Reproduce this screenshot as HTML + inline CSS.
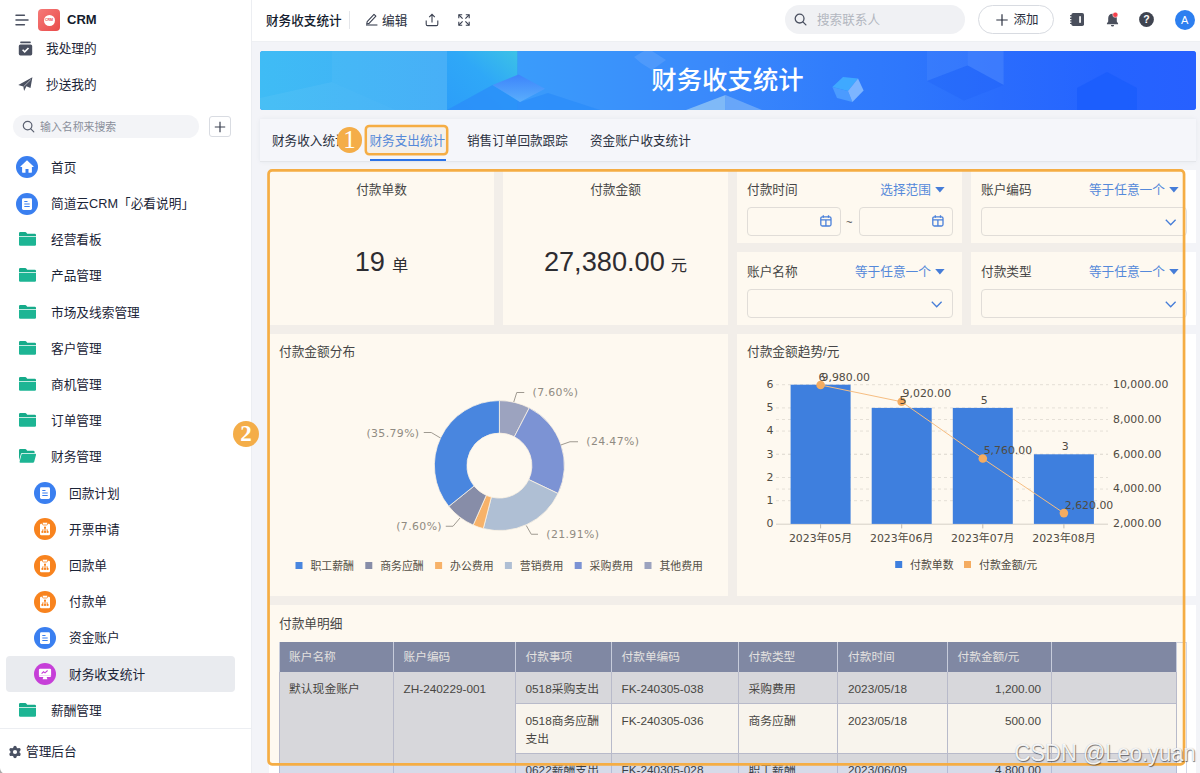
<!DOCTYPE html>
<html lang="zh-CN">
<head>
<meta charset="utf-8">
<title>财务收支统计</title>
<style>
*{box-sizing:border-box;margin:0;padding:0}
html,body{width:1200px;height:773px;overflow:hidden}
body{position:relative;background:#f3f4f8;font-family:"Liberation Sans","Noto Sans CJK SC",sans-serif;font-size:12.7px;color:#1f2533}
#side{position:absolute;left:0;top:0;width:252px;height:773px;background:#fff;border-right:1px solid #eceef2}
#top{position:absolute;left:252px;top:0;width:948px;height:42px;background:#fff;border-bottom:1px solid #eef0f3}
.t{position:absolute;white-space:nowrap;line-height:20px;height:20px}
.mi{position:absolute;left:0;width:251px;height:36px}
.mi .tx{position:absolute;left:51px;top:8.600px;line-height:20px;white-space:nowrap;color:#1b2437}
.mi.sub .tx{left:69px}
.mi svg{position:absolute}
.card{position:absolute;background:#fff}
.ct{position:absolute;white-space:nowrap;line-height:20px;height:20px;color:#3a3f4a}
.blue{color:#4a87e8}
.inp{position:absolute;border:1px solid #e0e2e6;border-radius:4px;background:#fff;height:29px}
svg{position:absolute;overflow:visible}
svg text{font-family:"DejaVu Sans","Noto Sans CJK SC",sans-serif}
table{border-collapse:collapse}
</style>
</head>
<body>
<div id="side">
<svg style="left:15px;top:13px" width="14" height="14" viewBox="0 0 14 14"><g stroke="#4a5060" stroke-width="1.5" stroke-linecap="round"><path d="M1 2.200H9.400M1 7H13M1 11.800H9.400"/></g></svg>
<div style="position:absolute;left:38px;top:9px;width:22px;height:22px;border-radius:4px;background:linear-gradient(135deg,#f57a78,#e94b4b)"><div style="position:absolute;left:5.5px;top:5.5px;width:11px;height:11px;border-radius:50%;background:#fff"></div><div style="position:absolute;left:0;top:8.6px;width:22px;text-align:center;font-size:3.6px;line-height:5px;font-weight:bold;color:#ea5050">CRM</div></div>
<div class="t" style="left:67px;top:10px;font-weight:bold;font-size:13px;color:#141c2e">CRM</div>
<svg style="left:18px;top:41px" width="15" height="15" viewBox="0 0 15 15"><rect x="2.2" y="0.6" width="10.6" height="1.6" rx=".6" fill="#4a5060"/><rect x="0.8" y="3.4" width="13.4" height="11" rx="1.6" fill="#4a5060"/><path d="M4.6 8.8l2.1 2.1 3.8-3.9" stroke="#fff" stroke-width="1.6" fill="none"/></svg>
<div class="t" style="left:46px;top:38.700px;color:#1b2437">我处理的</div>
<svg style="left:18.200px;top:76.600px" width="15" height="15" viewBox="0 0 15 15"><path d="M.300 7.900L14.400 .200 12.500 10.900 8.400 9.300 6.100 13.900 5.300 9.500z" fill="#4a5060"/><path d="M5.600 9.700L12.800 2.600" stroke="#fff" stroke-width=".7" opacity=".8"/></svg>
<div class="t" style="left:46px;top:74.900px;color:#1b2437">抄送我的</div>
<div style="position:absolute;left:13px;top:115px;width:186px;height:23px;border-radius:12px;background:#f3f4f7"></div>
<svg style="left:22px;top:120px" width="13" height="13" viewBox="0 0 13 13"><circle cx="5.6" cy="5.6" r="4.3" fill="none" stroke="#5a6070" stroke-width="1.2"/><path d="M8.8 8.8l3 3" stroke="#5a6070" stroke-width="1.2" stroke-linecap="round"/></svg>
<div class="t" style="left:40px;top:116.5px;font-size:10.9px;color:#8a8f9b">输入名称来搜索</div>
<div style="position:absolute;left:209px;top:116px;width:22px;height:21px;border:1px solid #d9dce2;border-radius:3px;background:#fff"></div>
<svg style="left:214px;top:121px" width="12" height="12" viewBox="0 0 12 12"><path d="M6 0.8V11.2M0.8 6H11.2" stroke="#3a4050" stroke-width="1.2"/></svg>
<div class="mi" style="top:149.3px">
<svg style="left:16.0px;top:7px" width="22" height="22" viewBox="0 0 22 22"><circle cx="11" cy="11" r="11" fill="#3a7ff0"/>
<path d="M11 4.300L4.400 10.400Q4.200 10.900 4.800 10.900H6.100V16.100Q6.100 16.700 6.700 16.700H9.500V13.100H12.500V16.700H15.300Q15.900 16.700 15.900 16.100V10.900H17.200Q17.800 10.900 17.600 10.400z" fill="#fff"/>
</svg>
<div class="tx">首页</div></div>
<div class="mi" style="top:185.5px">
<svg style="left:16.0px;top:7px" width="22" height="22" viewBox="0 0 22 22"><circle cx="11" cy="11" r="11" fill="#3a7ff0"/>
<rect x="6" y="5.200" width="10" height="11.800" rx="1.400" fill="#fff"/><path d="M8.300 8.500h3.200M8.300 11h5.400M8.300 13.500h5.400" stroke="#3a7ff0" stroke-width="1.100"/>
</svg>
<div class="tx">简道云CRM「必看说明」</div></div>
<div class="mi" style="top:221.7px">
<svg style="left:18.5px;top:10.6px" width="17" height="14" viewBox="0 0 17 14"><path d="M0 1.2Q0 0 1.2 0H6.2Q7 0 7.5 .7L8.2 1.7H15.8Q17 1.7 17 2.9V4.2H0z" fill="#16ab8a"/><path d="M0 5H17V12.6Q17 13.8 15.8 13.8H1.2Q0 13.8 0 12.6z" fill="#1db594"/></svg>
<div class="tx">经营看板</div></div>
<div class="mi" style="top:257.9px">
<svg style="left:18.5px;top:10.6px" width="17" height="14" viewBox="0 0 17 14"><path d="M0 1.2Q0 0 1.2 0H6.2Q7 0 7.5 .7L8.2 1.7H15.8Q17 1.7 17 2.9V4.2H0z" fill="#16ab8a"/><path d="M0 5H17V12.6Q17 13.8 15.8 13.8H1.2Q0 13.8 0 12.6z" fill="#1db594"/></svg>
<div class="tx">产品管理</div></div>
<div class="mi" style="top:294.1px">
<svg style="left:18.5px;top:10.6px" width="17" height="14" viewBox="0 0 17 14"><path d="M0 1.2Q0 0 1.2 0H6.2Q7 0 7.5 .7L8.2 1.7H15.8Q17 1.7 17 2.9V4.2H0z" fill="#16ab8a"/><path d="M0 5H17V12.6Q17 13.8 15.8 13.8H1.2Q0 13.8 0 12.6z" fill="#1db594"/></svg>
<div class="tx">市场及线索管理</div></div>
<div class="mi" style="top:330.3px">
<svg style="left:18.5px;top:10.6px" width="17" height="14" viewBox="0 0 17 14"><path d="M0 1.2Q0 0 1.2 0H6.2Q7 0 7.5 .7L8.2 1.7H15.8Q17 1.7 17 2.9V4.2H0z" fill="#16ab8a"/><path d="M0 5H17V12.6Q17 13.8 15.8 13.8H1.2Q0 13.8 0 12.6z" fill="#1db594"/></svg>
<div class="tx">客户管理</div></div>
<div class="mi" style="top:366.5px">
<svg style="left:18.5px;top:10.6px" width="17" height="14" viewBox="0 0 17 14"><path d="M0 1.2Q0 0 1.2 0H6.2Q7 0 7.5 .7L8.2 1.7H15.8Q17 1.7 17 2.9V4.2H0z" fill="#16ab8a"/><path d="M0 5H17V12.6Q17 13.8 15.8 13.8H1.2Q0 13.8 0 12.6z" fill="#1db594"/></svg>
<div class="tx">商机管理</div></div>
<div class="mi" style="top:402.7px">
<svg style="left:18.5px;top:10.6px" width="17" height="14" viewBox="0 0 17 14"><path d="M0 1.2Q0 0 1.2 0H6.2Q7 0 7.5 .7L8.2 1.7H15.8Q17 1.7 17 2.9V4.2H0z" fill="#16ab8a"/><path d="M0 5H17V12.6Q17 13.8 15.8 13.8H1.2Q0 13.8 0 12.6z" fill="#1db594"/></svg>
<div class="tx">订单管理</div></div>
<div class="mi" style="top:438.9px">
<svg style="left:18.5px;top:10.6px" width="17" height="14" viewBox="0 0 17 14"><path d="M0 1.2Q0 0 1.2 0H6.2Q7 0 7.5 .7L8.2 1.7H14.4Q15.6 1.7 15.6 2.9V4H3.2Q2.2 4 1.9 5L0 11.5z" fill="#16ab8a"/><path d="M3.6 4.8H16.2Q17.3 4.8 17 5.9L15.2 12.8Q14.9 13.8 13.9 13.8H1.4Q.3 13.8 .6 12.8L2.4 5.8Q2.7 4.8 3.6 4.8z" fill="#1db594"/></svg>
<div class="tx">财务管理</div></div>
<div class="mi sub" style="top:475.1px">
<svg style="left:34.2px;top:7px" width="22" height="22" viewBox="0 0 22 22"><circle cx="11" cy="11" r="11" fill="#3a7ff0"/>
<rect x="6" y="5.200" width="10" height="11.800" rx="1.400" fill="#fff"/><path d="M8.300 8.500h3.200M8.300 11h5.400M8.300 13.500h5.400" stroke="#3a7ff0" stroke-width="1.100"/>
</svg>
<div class="tx">回款计划</div></div>
<div class="mi sub" style="top:511.3px">
<svg style="left:34.2px;top:7px" width="22" height="22" viewBox="0 0 22 22"><circle cx="11" cy="11" r="11" fill="#f8831e"/>
<rect x="6" y="5.700" width="10" height="11.500" rx="1.200" fill="#fff"/><rect x="8.500" y="4.300" width="5" height="2.700" rx=".9" fill="#fff" stroke="#f8831e" stroke-width=".8"/><g fill="#f8831e"><rect x="10" y="8.700" width="2" height="2"/><rect x="7.500" y="13" width="1.900" height="1.900"/><rect x="10.050" y="13" width="1.900" height="1.900"/><rect x="12.600" y="13" width="1.900" height="1.900"/><rect x="10.700" y="10.400" width=".6" height="2.800"/><rect x="8.150" y="11.700" width="5.700" height=".6"/><rect x="8.150" y="11.700" width=".6" height="1.500"/><rect x="13.250" y="11.700" width=".6" height="1.500"/></g>
</svg>
<div class="tx">开票申请</div></div>
<div class="mi sub" style="top:547.5px">
<svg style="left:34.2px;top:7px" width="22" height="22" viewBox="0 0 22 22"><circle cx="11" cy="11" r="11" fill="#f8831e"/>
<rect x="6" y="5.700" width="10" height="11.500" rx="1.200" fill="#fff"/><rect x="8.500" y="4.300" width="5" height="2.700" rx=".9" fill="#fff" stroke="#f8831e" stroke-width=".8"/><g fill="#f8831e"><rect x="10" y="8.700" width="2" height="2"/><rect x="7.500" y="13" width="1.900" height="1.900"/><rect x="10.050" y="13" width="1.900" height="1.900"/><rect x="12.600" y="13" width="1.900" height="1.900"/><rect x="10.700" y="10.400" width=".6" height="2.800"/><rect x="8.150" y="11.700" width="5.700" height=".6"/><rect x="8.150" y="11.700" width=".6" height="1.500"/><rect x="13.250" y="11.700" width=".6" height="1.500"/></g>
</svg>
<div class="tx">回款单</div></div>
<div class="mi sub" style="top:583.7px">
<svg style="left:34.2px;top:7px" width="22" height="22" viewBox="0 0 22 22"><circle cx="11" cy="11" r="11" fill="#f8831e"/>
<rect x="6" y="5.700" width="10" height="11.500" rx="1.200" fill="#fff"/><rect x="8.500" y="4.300" width="5" height="2.700" rx=".9" fill="#fff" stroke="#f8831e" stroke-width=".8"/><g fill="#f8831e"><rect x="10" y="8.700" width="2" height="2"/><rect x="7.500" y="13" width="1.900" height="1.900"/><rect x="10.050" y="13" width="1.900" height="1.900"/><rect x="12.600" y="13" width="1.900" height="1.900"/><rect x="10.700" y="10.400" width=".6" height="2.800"/><rect x="8.150" y="11.700" width="5.700" height=".6"/><rect x="8.150" y="11.700" width=".6" height="1.500"/><rect x="13.250" y="11.700" width=".6" height="1.500"/></g>
</svg>
<div class="tx">付款单</div></div>
<div class="mi sub" style="top:619.9px">
<svg style="left:34.2px;top:7px" width="22" height="22" viewBox="0 0 22 22"><circle cx="11" cy="11" r="11" fill="#3a7ff0"/>
<rect x="6" y="5.200" width="10" height="11.800" rx="1.400" fill="#fff"/><path d="M8.300 8.500h3.200M8.300 11h5.400M8.300 13.500h5.400" stroke="#3a7ff0" stroke-width="1.100"/>
</svg>
<div class="tx">资金账户</div></div>
<div style="position:absolute;left:6px;top:656.1px;width:229px;height:36px;border-radius:4px;background:#e9ebef"></div>
<div class="mi sub" style="top:656.1px">
<svg style="left:34.2px;top:7px" width="22" height="22" viewBox="0 0 22 22"><circle cx="11" cy="11" r="11" fill="#c63fd8"/>
<rect x="4.900" y="5.800" width="12.200" height="8.200" rx="1.200" fill="#fff"/><path d="M9.300 14h3.400l.7 2.200H8.600z" fill="#fff"/><path d="M4.900 12.300h12.200" stroke="#c63fd8" stroke-width=".5" opacity=".5"/><path d="M7.600 10.600l1.900-1.800 1.500 1.100 2.600-2.400" stroke="#c63fd8" stroke-width="1.100" fill="none"/>
</svg>
<div class="tx">财务收支统计</div></div>
<div class="mi" style="top:692.3px">
<svg style="left:18.5px;top:10.6px" width="17" height="14" viewBox="0 0 17 14"><path d="M0 1.2Q0 0 1.2 0H6.2Q7 0 7.5 .7L8.2 1.7H15.8Q17 1.7 17 2.9V4.2H0z" fill="#16ab8a"/><path d="M0 5H17V12.6Q17 13.8 15.8 13.8H1.2Q0 13.8 0 12.6z" fill="#1db594"/></svg>
<div class="tx">薪酬管理</div></div>
<div style="position:absolute;left:0;top:728px;width:251px;height:1px;background:#eceef2"></div>
<svg style="left:9.300px;top:746px" width="12" height="12" viewBox="-6 -6 12 12"><g stroke="#4a5163" stroke-width="3.300" stroke-linecap="round"><line x1="-0.00" y1="-4.60" x2="0.00" y2="4.60"/><line x1="-3.98" y1="-2.30" x2="3.98" y2="2.30"/><line x1="3.98" y1="-2.30" x2="-3.98" y2="2.30"/></g><circle r="4.500" fill="#4a5163"/><circle r="2.100" fill="#fff"/></svg>
<div class="t" style="left:26px;top:742px;color:#1b2437">管理后台</div>
</div>
<div id="top"></div>
<div class="t" style="left:266px;top:10.800px;font-weight:500;font-size:12.6px;color:#141c2e">财务收支统计</div>
<div style="position:absolute;left:349px;top:11px;width:1px;height:18px;background:#e4e6ea"></div>
<svg style="left:364.500px;top:12.200px" width="13" height="14" viewBox="0 0 13 14"><path d="M2.2 9.6L9 2.4l1.900 1.800L4.100 11.400 1.700 12z" fill="none" stroke="#3a4050" stroke-width="1.1" stroke-linejoin="round"/><path d="M1 13h11.400" stroke="#3a4050" stroke-width="1.1"/></svg>
<div class="t" style="left:382px;top:10.800px;color:#2a3040">编辑</div>
<svg style="left:425px;top:13px" width="14" height="14" viewBox="0 0 14 14"><path d="M1.2 7.6v3.600q0 1.400 1.400 1.400h8.800q1.400 0 1.400-1.400V7.600" fill="none" stroke="#3a4050" stroke-width="1.1"/><path d="M7 9.600V1.600M4.200 4.200L7 1.400l2.800 2.800" fill="none" stroke="#3a4050" stroke-width="1.1"/></svg>
<svg style="left:458px;top:14px" width="12" height="12" viewBox="0 0 12 12"><g fill="none" stroke="#3a4050" stroke-width="1.1"><path d="M.8 4.200V.8h3.400M7.800 .8h3.400v3.400M11.200 7.800v3.400h-3.400M4.200 11.200h-3.400v-3.400"/><path d="M1 1l3.600 3.600M11 1L7.400 4.600M11 11L7.400 7.400M1 11l3.600-3.600"/></g></svg>
<div style="position:absolute;left:785px;top:5px;width:180px;height:29px;border-radius:15px;background:#f0f1f4"></div>
<svg style="left:794px;top:13px" width="13" height="13" viewBox="0 0 13 13"><circle cx="5.6" cy="5.600" r="4.400" fill="none" stroke="#4a5060" stroke-width="1.300"/><path d="M8.900 8.900l3 3" stroke="#4a5060" stroke-width="1.300" stroke-linecap="round"/></svg>
<div class="t" style="left:817px;top:10px;color:#b3b7c0;font-size:12.600px">搜索联系人</div>
<div style="position:absolute;left:978px;top:5px;width:76px;height:29px;border-radius:15px;background:#fff;border:1px solid #d8dbe1"></div>
<svg style="left:996px;top:14px" width="12" height="12" viewBox="0 0 12 12"><path d="M6 .300V11.700M.300 6H11.700" stroke="#2a3040" stroke-width="1.200"/></svg>
<div class="t" style="left:1013.500px;top:10px;color:#2a3040;font-size:12.500px">添加</div>
<svg style="left:1070px;top:13px" width="14" height="13" viewBox="0 0 14 13"><rect x="1.400" y="0" width="12.600" height="13" rx="1.800" fill="#4a4f5c"/><rect x="9.200" y="3.200" width="1.700" height="6.600" fill="#fff"/><g fill="#4a4f5c"><rect x="0" y="2" width="2.400" height="1.300" rx=".5"/><rect x="0" y="4.600" width="2.400" height="1.300" rx=".5"/><rect x="0" y="7.200" width="2.400" height="1.300" rx=".5"/><rect x="0" y="9.800" width="2.400" height="1.300" rx=".5"/></g></svg>
<svg style="left:1106px;top:12px" width="14" height="15" viewBox="0 0 14 15"><path d="M6.500 1.800c-2.700 0-4.300 2-4.300 4.500v3.200L.9 11.600v.6h11.200v-.6l-1.300-2.100V6.300c0-2.500-1.600-4.500-4.300-4.500z" fill="#4a4f5c"/><path d="M4.900 13h3.200a1.600 1.600 0 01-3.200 0z" fill="#4a4f5c"/><circle cx="9.300" cy="2.800" r="2.600" fill="#f5404b" stroke="#fff" stroke-width=".5"/></svg>
<svg style="left:1139px;top:12px" width="15" height="15" viewBox="0 0 15 15"><circle cx="7.500" cy="7.500" r="7.400" fill="#3f4450"/><text x="7.500" y="11.200" text-anchor="middle" font-size="10.500" font-weight="bold" fill="#fff" style="font-family:'Liberation Sans',sans-serif">?</text></svg>
<div style="position:absolute;left:1174.600px;top:10px;width:20px;height:20px;border-radius:50%;background:#2d7ff0;color:#fff;font-size:11px;line-height:20px;text-align:center">A</div>
<div style="position:absolute;left:260px;top:51px;width:935.500px;height:59px;border-radius:3px;overflow:hidden;background:#2d7efb">
<svg style="left:0;top:0" width="936" height="59" viewBox="0 0 936 59"><defs><linearGradient id="bg1" x1="0" x2="1" y1="0" y2="0"><stop offset="0" stop-color="#3fbcf5"/><stop offset="1" stop-color="#41adf7"/></linearGradient><linearGradient id="bg2" x1="0" x2="1" y1="0" y2="0"><stop offset="0" stop-color="#3a9cfb"/><stop offset=".3" stop-color="#3a88fb"/><stop offset=".46" stop-color="#317dfc"/><stop offset=".57" stop-color="#2e77fc"/><stop offset=".71" stop-color="#2a6cfd"/><stop offset=".86" stop-color="#2564ff"/><stop offset="1" stop-color="#2760ff"/></linearGradient><linearGradient id="fc" x1="0" x2="1" y1="1" y2="0"><stop offset="0" stop-color="#2c9ef9"/><stop offset=".55" stop-color="#2fa8f7"/><stop offset="1" stop-color="#3cc2e6"/></linearGradient><linearGradient id="dm" x1="0" x2="0" y1="0" y2="1"><stop offset="0" stop-color="#3d84fb"/><stop offset="1" stop-color="#5aaefc"/></linearGradient></defs>
<rect x="0" y="0" width="187" height="59" fill="url(#bg1)"/>
<rect x="257.500" y="0" width="679" height="59" fill="url(#bg2)"/>
<rect x="187" y="0" width="70.500" height="59" fill="url(#fc)"/>
<polygon points="0.0,59.0 0.0,47.0 72.0,31.0 136.0,59.0" fill="#fff" opacity=".05"/>
<polygon points="72.0,0.0 187.0,0.0 187.0,59.0 136.0,59.0 72.0,31.0" fill="#fff" opacity=".035"/>
<polygon points="187.0,59.0 232.5,34.0 260.0,51.0 288.0,42.0 340.0,59.0" fill="#2b8cf9" opacity=".75"/>
<polygon points="257.5,0.0 257.5,23.5 285.0,37.8 315.0,59.0 340.0,59.0 380.0,0.0" fill="#3a9afb" opacity=".0"/>
<polygon points="232.5,34.0 258.5,23.5 285.0,37.8 260.0,51.0" fill="url(#dm)"/>
<polygon points="374.0,6.0 384.0,0.0 392.0,0.0 406.0,9.0 392.0,19.0 381.0,12.0" fill="#7fb4fc" opacity=".3"/>
<polygon points="426.0,59.0 465.5,44.0 465.5,59.0" fill="#8cc2f6" opacity=".85"/>
<polygon points="465.5,59.0 465.5,44.0 502.0,59.0" fill="#74aef9" opacity=".8"/>
<polygon points="572.4,36.0 588.0,40.0 592.4,51.0 577.0,47.0" fill="#4b9bff"/>
<polygon points="572.4,36.0 583.0,26.0 598.0,27.4 588.0,40.0" fill="#3fa9ff"/>
<polygon points="588.0,40.0 598.0,27.4 603.6,39.4 592.4,51.0" fill="#7db5ff"/>
<polygon points="667.0,0.0 707.6,0.0 707.6,14.6 667.0,30.0" fill="#5a97ff" opacity=".22"/>
<polygon points="707.6,0.0 743.6,0.0 743.6,34.0 707.6,14.6" fill="#6aa2ff" opacity=".28"/>
<polygon points="667.0,30.0 707.6,14.6 743.6,34.0 704.0,49.4" fill="#1f62f5" opacity=".35"/>
<polygon points="817.0,59.0 817.0,37.0 847.0,21.0 877.0,37.0 877.0,59.0" fill="#1a5cfd" opacity=".8"/>
</svg>
<div style="position:absolute;left:0;top:0;width:935px;height:59px;line-height:58px;text-align:center;color:#fff;font-size:25.300px;font-weight:500;letter-spacing:.1px">财务收支统计</div>
</div>
<div style="position:absolute;left:260px;top:119px;width:935.500px;height:42.500px;background:#f5f6fa;border-bottom:1px solid #e4e6ea;box-shadow:0 0 4px rgba(120,130,160,.10)"></div>
<div class="t" style="left:272px;top:130.500px;color:#2a3040;font-size:12.600px">财务收入统计</div>
<div class="t" style="left:369.5px;top:130.500px;color:#4a87e8;font-size:12.600px">财务支出统计</div>
<div class="t" style="left:467px;top:130.500px;color:#2a3040;font-size:12.600px">销售订单回款跟踪</div>
<div class="t" style="left:590px;top:130.500px;color:#2a3040;font-size:12.600px">资金账户收支统计</div>
<div style="position:absolute;left:369.500px;top:158.800px;width:76px;height:2px;background:#2b73e8"></div>
<div class="card" style="left:269px;top:170px;width:225px;height:155px"></div>
<div class="ct" style="left:269px;top:179.500px;width:225px;text-align:center">付款单数</div>
<div class="t" style="left:269px;top:242px;width:225px;height:40px;line-height:40px;text-align:center;color:#1f2533"><span style="font-size:27.200px">19</span><span style="font-size:16.300px;margin-left:7px">单</span></div>
<div class="card" style="left:503px;top:170px;width:225px;height:155px"></div>
<div class="ct" style="left:503px;top:179.500px;width:225px;text-align:center">付款金额</div>
<div class="t" style="left:503px;top:242px;width:225px;height:40px;line-height:40px;text-align:center;color:#1f2533"><span style="font-size:27.200px">27,380.00</span><span style="font-size:16.300px;margin-left:6px">元</span></div>
<div class="card" style="left:737px;top:170px;width:225px;height:73px"></div>
<div class="ct" style="left:747px;top:179.5px">付款时间</div>
<div class="ct blue" style="right:269px;top:179.5px">选择范围</div>
<svg style="left:935.3px;top:186.8px" width="10" height="6" viewBox="0 0 10 6"><path d="M.2 0H9.600L4.900 5.400z" fill="#3a7be6"/></svg>
<div class="inp" style="left:746.5px;top:207px;width:94px"></div>
<div class="inp" style="left:859px;top:207px;width:93.500px"></div>
<div class="ct" style="left:846px;top:212px;font-size:11px">~</div>
<svg style="left:820.4px;top:215px" width="12" height="12" viewBox="0 0 12 12"><g fill="none" stroke="#3f7fe8" stroke-width="1.300"><rect x=".800" y="1.800" width="10.200" height="9.200" rx="1.500"/><path d="M.800 4.800h10.200M5.900 4.800v6.200M3.300 .300v2.400M8.500 .300v2.400"/></g></svg>
<svg style="left:932.4px;top:215px" width="12" height="12" viewBox="0 0 12 12"><g fill="none" stroke="#3f7fe8" stroke-width="1.300"><rect x=".800" y="1.800" width="10.200" height="9.200" rx="1.500"/><path d="M.800 4.800h10.200M5.900 4.800v6.200M3.300 .300v2.400M8.500 .300v2.400"/></g></svg>
<div class="card" style="left:971px;top:170px;width:225px;height:73px"></div>
<div class="ct" style="left:981px;top:179.5px">账户编码</div>
<div class="ct blue" style="right:35px;top:179.5px">等于任意一个</div>
<svg style="left:1169.3px;top:186.8px" width="10" height="6" viewBox="0 0 10 6"><path d="M.2 0H9.600L4.900 5.400z" fill="#3a7be6"/></svg>
<div class="inp" style="left:980.5px;top:207px;width:206px"></div>
<svg style="left:1165.2px;top:218.8px" width="12" height="7" viewBox="0 0 12 7"><path d="M.800 .800L5.700 5.800l4.900-5" fill="none" stroke="#3a7be6" stroke-width="1.300"/></svg>
<div class="card" style="left:737px;top:252px;width:225px;height:73px"></div>
<div class="ct" style="left:747px;top:261.5px">账户名称</div>
<div class="ct blue" style="right:269px;top:261.5px">等于任意一个</div>
<svg style="left:935.3px;top:268.8px" width="10" height="6" viewBox="0 0 10 6"><path d="M.2 0H9.600L4.900 5.400z" fill="#3a7be6"/></svg>
<div class="inp" style="left:746.5px;top:289px;width:206px"></div>
<svg style="left:931.2px;top:300.8px" width="12" height="7" viewBox="0 0 12 7"><path d="M.800 .800L5.700 5.800l4.900-5" fill="none" stroke="#3a7be6" stroke-width="1.300"/></svg>
<div class="card" style="left:971px;top:252px;width:225px;height:73px"></div>
<div class="ct" style="left:981px;top:261.5px">付款类型</div>
<div class="ct blue" style="right:35px;top:261.5px">等于任意一个</div>
<svg style="left:1169.3px;top:268.8px" width="10" height="6" viewBox="0 0 10 6"><path d="M.2 0H9.600L4.900 5.400z" fill="#3a7be6"/></svg>
<div class="inp" style="left:980.5px;top:289px;width:206px"></div>
<svg style="left:1165.2px;top:300.8px" width="12" height="7" viewBox="0 0 12 7"><path d="M.800 .800L5.700 5.800l4.900-5" fill="none" stroke="#3a7be6" stroke-width="1.300"/></svg>
<div class="card" style="left:269px;top:334px;width:459px;height:262px"></div>
<div class="ct" style="left:279px;top:342px">付款金额分布</div>
<div class="card" style="left:737px;top:334px;width:459px;height:262px"></div>
<div class="ct" style="left:747px;top:342px">付款金额趋势/元</div>
<div class="card" style="left:269px;top:605px;width:927px;height:180px"></div>
<div class="ct" style="left:279px;top:613.500px">付款单明细</div>
<svg style="left:0;top:0" width="1200" height="773" viewBox="0 0 1200 773">
<path d="M499.40 400.60A65 65 0 0 1 529.27 407.87L514.34 436.74A32.5 32.5 0 0 0 499.40 433.10Z" fill="#97a3cb" stroke="#fdf9f3" stroke-width=".800"/>
<path d="M529.27 407.87A65 65 0 0 1 558.09 493.53L528.75 479.57A32.5 32.5 0 0 0 514.34 436.74Z" fill="#7492e1" stroke="#fdf9f3" stroke-width=".800"/>
<path d="M558.09 493.53A65 65 0 0 1 483.31 528.58L491.36 497.09A32.5 32.5 0 0 0 528.75 479.57Z" fill="#abc1e1" stroke="#fdf9f3" stroke-width=".800"/>
<path d="M483.31 528.58A65 65 0 0 1 473.17 525.07L486.29 495.34A32.5 32.5 0 0 0 491.36 497.09Z" fill="#f8b36f" stroke="#fdf9f3" stroke-width=".800"/>
<path d="M473.17 525.07A65 65 0 0 1 448.77 506.37L474.09 485.98A32.5 32.5 0 0 0 486.29 495.34Z" fill="#808cb2" stroke="#fdf9f3" stroke-width=".800"/>
<path d="M448.77 506.37A65 65 0 0 1 499.40 400.60L499.40 433.10A32.5 32.5 0 0 0 474.09 485.98Z" fill="#3e84ed" stroke="#fdf9f3" stroke-width=".800"/>
<polyline points="513.75,402 516.75,392.5 524.25,392.5" fill="none" stroke="#9a9a9a" stroke-width="1"/>
<polyline points="560.75,445 570,441.75 578,441.75" fill="none" stroke="#9a9a9a" stroke-width="1"/>
<polyline points="526.25,525.5 531.25,534.25 538,534.25" fill="none" stroke="#9a9a9a" stroke-width="1"/>
<polyline points="460,518 453,526.25 445.75,526.25" fill="none" stroke="#9a9a9a" stroke-width="1"/>
<polyline points="440.5,438 431.25,432.5 423.75,432.5" fill="none" stroke="#9a9a9a" stroke-width="1"/>
<text x="532.5" y="396" text-anchor="start" font-size="10.900" letter-spacing=".38" fill="#8a8a8a">(7.60%)</text>
<text x="586.25" y="445.25" text-anchor="start" font-size="10.900" letter-spacing=".38" fill="#8a8a8a">(24.47%)</text>
<text x="546.25" y="538.25" text-anchor="start" font-size="10.900" letter-spacing=".38" fill="#8a8a8a">(21.91%)</text>
<text x="442" y="529.75" text-anchor="end" font-size="10.900" letter-spacing=".38" fill="#8a8a8a">(7.60%)</text>
<text x="419.5" y="436.5" text-anchor="end" font-size="10.900" letter-spacing=".38" fill="#8a8a8a">(35.79%)</text>
<rect x="295.5" y="562" width="7" height="7" fill="#3e84ed"/>
<text x="310.4" y="569.700" font-size="10.900" fill="#4a4a4a">职工薪酬</text>
<rect x="365.3" y="562" width="7" height="7" fill="#808cb2"/>
<text x="380.2" y="569.700" font-size="10.900" fill="#4a4a4a">商务应酬</text>
<rect x="435.1" y="562" width="7" height="7" fill="#f8b36f"/>
<text x="450.0" y="569.700" font-size="10.900" fill="#4a4a4a">办公费用</text>
<rect x="504.9" y="562" width="7" height="7" fill="#abc1e1"/>
<text x="519.8" y="569.700" font-size="10.900" fill="#4a4a4a">营销费用</text>
<rect x="574.7" y="562" width="7" height="7" fill="#7492e1"/>
<text x="589.6" y="569.700" font-size="10.900" fill="#4a4a4a">采购费用</text>
<rect x="644.5" y="562" width="7" height="7" fill="#97a3cb"/>
<text x="659.4" y="569.700" font-size="10.900" fill="#4a4a4a">其他费用</text>
</svg>
<svg style="left:0;top:0" width="1200" height="773" viewBox="0 0 1200 773">
<line x1="776" x2="1108" y1="500.70" y2="500.70" stroke="#e2e2e2" stroke-width=".9" stroke-dasharray="3,3"/>
<line x1="776" x2="1108" y1="477.50" y2="477.50" stroke="#e2e2e2" stroke-width=".9" stroke-dasharray="3,3"/>
<line x1="776" x2="1108" y1="454.30" y2="454.30" stroke="#e2e2e2" stroke-width=".9" stroke-dasharray="3,3"/>
<line x1="776" x2="1108" y1="431.10" y2="431.10" stroke="#e2e2e2" stroke-width=".9" stroke-dasharray="3,3"/>
<line x1="776" x2="1108" y1="407.90" y2="407.90" stroke="#e2e2e2" stroke-width=".9" stroke-dasharray="3,3"/>
<line x1="776" x2="1108" y1="384.70" y2="384.70" stroke="#e2e2e2" stroke-width=".9" stroke-dasharray="3,3"/>
<line x1="776" x2="1108" y1="489.10" y2="489.10" stroke="#e2e2e2" stroke-width=".9" stroke-dasharray="3,3"/>
<line x1="776" x2="1108" y1="454.30" y2="454.30" stroke="#e2e2e2" stroke-width=".9" stroke-dasharray="3,3"/>
<line x1="776" x2="1108" y1="419.50" y2="419.50" stroke="#e2e2e2" stroke-width=".9" stroke-dasharray="3,3"/>
<line x1="776" x2="1108" y1="524.1999999999999" y2="524.1999999999999" stroke="#d4d4d4" stroke-width="1"/>
<rect x="790.6" y="384.70" width="60" height="139.20" fill="#327dec"/>
<rect x="871.7" y="407.90" width="60" height="116.00" fill="#327dec"/>
<rect x="952.8" y="407.90" width="60" height="116.00" fill="#327dec"/>
<rect x="1033.9" y="454.30" width="60" height="69.60" fill="#327dec"/>
<line x1="820.6" x2="820.6" y1="523.9" y2="528.4" stroke="#bdbdbd" stroke-width="1"/>
<line x1="901.7" x2="901.7" y1="523.9" y2="528.4" stroke="#bdbdbd" stroke-width="1"/>
<line x1="982.8" x2="982.8" y1="523.9" y2="528.4" stroke="#bdbdbd" stroke-width="1"/>
<line x1="1063.9" x2="1063.9" y1="523.9" y2="528.4" stroke="#bdbdbd" stroke-width="1"/>
<text x="770" y="527.10" text-anchor="middle" font-size="10.900" fill="#454545">0</text>
<text x="770" y="503.90" text-anchor="middle" font-size="10.900" fill="#454545">1</text>
<text x="770" y="480.70" text-anchor="middle" font-size="10.900" fill="#454545">2</text>
<text x="770" y="457.50" text-anchor="middle" font-size="10.900" fill="#454545">3</text>
<text x="770" y="434.30" text-anchor="middle" font-size="10.900" fill="#454545">4</text>
<text x="770" y="411.10" text-anchor="middle" font-size="10.900" fill="#454545">5</text>
<text x="770" y="387.90" text-anchor="middle" font-size="10.900" fill="#454545">6</text>
<text x="1113" y="527.10" font-size="10.900" fill="#454545">2,000.00</text>
<text x="1113" y="492.30" font-size="10.900" fill="#454545">4,000.00</text>
<text x="1113" y="457.50" font-size="10.900" fill="#454545">6,000.00</text>
<text x="1113" y="422.70" font-size="10.900" fill="#454545">8,000.00</text>
<text x="1113" y="387.90" font-size="10.900" fill="#454545">10,000.00</text>
<text x="820.6" y="542.400" text-anchor="middle" font-size="10.900" fill="#454545">2023年05月</text>
<text x="901.7" y="542.400" text-anchor="middle" font-size="10.900" fill="#454545">2023年06月</text>
<text x="982.8" y="542.400" text-anchor="middle" font-size="10.900" fill="#454545">2023年07月</text>
<text x="1063.9" y="542.400" text-anchor="middle" font-size="10.900" fill="#454545">2023年08月</text>
<polyline points="820.6,385.0 901.7,401.8 982.8,458.5 1063.9,513.1" fill="none" stroke="#f7c08a" stroke-width="1"/>
<circle cx="820.6" cy="385.0" r="4.300" fill="#f5ad66"/>
<circle cx="901.7" cy="401.8" r="4.300" fill="#f5ad66"/>
<circle cx="982.8" cy="458.5" r="4.300" fill="#f5ad66"/>
<circle cx="1063.9" cy="513.1" r="4.300" fill="#f5ad66"/>
<text x="821.5" y="380.6" font-size="10.900" fill="#454545">9,980.00</text>
<text x="902.6" y="397.4" font-size="10.900" fill="#454545">9,020.00</text>
<text x="983.7" y="454.1" font-size="10.900" fill="#454545">5,760.00</text>
<text x="1064.8" y="508.7" font-size="10.900" fill="#454545">2,620.00</text>
<text x="821.9" y="380.50" text-anchor="middle" font-size="10.900" fill="#454545">6</text>
<text x="903.0" y="403.70" text-anchor="middle" font-size="10.900" fill="#454545">5</text>
<text x="984.0999999999999" y="403.70" text-anchor="middle" font-size="10.900" fill="#454545">5</text>
<text x="1065.2" y="450.10" text-anchor="middle" font-size="10.900" fill="#454545">3</text>
<rect x="895.200" y="561" width="7" height="7" fill="#327dec"/><text x="910" y="568.500" font-size="10.900" fill="#444">付款单数</text>
<rect x="964" y="561" width="7" height="7" fill="#f5ad66"/><text x="979" y="568.500" font-size="10.900" fill="#444">付款金额/元</text>
</svg>
<div style="position:absolute;left:279px;top:641.500px;width:907.500px;height:1px;background:#d3d7e6"></div>
<div style="position:absolute;left:279px;top:642px;width:114.5px;height:30px;background:#7986ad;border-left:1px solid #c5cfe9;border-right:1px solid #c5cfe9;color:#e3e6ee;line-height:30px;padding-left:9px;font-size:11.700px;white-space:nowrap">账户名称</div>
<div style="position:absolute;left:393.5px;top:642px;width:122.0px;height:30px;background:#7986ad;border-right:1px solid #c5cfe9;color:#e3e6ee;line-height:30px;padding-left:10px;font-size:11.700px;white-space:nowrap">账户编码</div>
<div style="position:absolute;left:515.5px;top:642px;width:96.0px;height:30px;background:#7986ad;border-right:1px solid #c5cfe9;color:#e3e6ee;line-height:30px;padding-left:10px;font-size:11.700px;white-space:nowrap">付款事项</div>
<div style="position:absolute;left:611.5px;top:642px;width:127.0px;height:30px;background:#7986ad;border-right:1px solid #c5cfe9;color:#e3e6ee;line-height:30px;padding-left:10px;font-size:11.700px;white-space:nowrap">付款单编码</div>
<div style="position:absolute;left:738.5px;top:642px;width:99.5px;height:30px;background:#7986ad;border-right:1px solid #c5cfe9;color:#e3e6ee;line-height:30px;padding-left:10px;font-size:11.700px;white-space:nowrap">付款类型</div>
<div style="position:absolute;left:838px;top:642px;width:109.5px;height:30px;background:#7986ad;border-right:1px solid #c5cfe9;color:#e3e6ee;line-height:30px;padding-left:10px;font-size:11.700px;white-space:nowrap">付款时间</div>
<div style="position:absolute;left:947.5px;top:642px;width:104.5px;height:30px;background:#7986ad;border-right:1px solid #c5cfe9;color:#e3e6ee;line-height:30px;padding-left:10px;font-size:11.700px;white-space:nowrap">付款金额/元</div>
<div style="position:absolute;left:1052px;top:642px;width:125px;height:30px;background:#7986ad;border-right:1px solid #c5cfe9;color:#e3e6ee;line-height:30px;padding-left:10px;font-size:11.700px;white-space:nowrap"></div>
<div style="position:absolute;left:279px;top:672px;width:114.5px;height:140px;background:#d6dbe9;border-left:1px solid #b4bcd7;border-right:1px solid #b4bcd7;border-bottom:1px solid #b4bcd7;color:#3b3f46;line-height:18px;padding-top:7.500px;padding-left:9px;font-size:11.800px">默认现金账户</div>
<div style="position:absolute;left:393.5px;top:672px;width:122.0px;height:140px;background:#d6dbe9;border-right:1px solid #b4bcd7;border-bottom:1px solid #b4bcd7;color:#3b3f46;line-height:18px;padding-top:7.500px;padding-left:10px;font-size:11.800px">ZH-240229-001</div>
<div style="position:absolute;left:515.5px;top:672px;width:96.0px;height:32.3px;background:#d6dbe9;border-right:1px solid #b4bcd7;border-bottom:1px solid #b4bcd7;color:#3b3f46;line-height:18px;padding-top:7.500px;padding-left:10px;font-size:11.800px">0518采购支出</div>
<div style="position:absolute;left:611.5px;top:672px;width:127.0px;height:32.3px;background:#d6dbe9;border-right:1px solid #b4bcd7;border-bottom:1px solid #b4bcd7;color:#3b3f46;line-height:18px;padding-top:7.500px;padding-left:10px;font-size:11.800px">FK-240305-038</div>
<div style="position:absolute;left:738.5px;top:672px;width:99.5px;height:32.3px;background:#d6dbe9;border-right:1px solid #b4bcd7;border-bottom:1px solid #b4bcd7;color:#3b3f46;line-height:18px;padding-top:7.500px;padding-left:10px;font-size:11.800px">采购费用</div>
<div style="position:absolute;left:838px;top:672px;width:109.5px;height:32.3px;background:#d6dbe9;border-right:1px solid #b4bcd7;border-bottom:1px solid #b4bcd7;color:#3b3f46;line-height:18px;padding-top:7.500px;padding-left:10px;font-size:11.800px">2023/05/18</div>
<div style="position:absolute;left:947.5px;top:672px;width:104.5px;height:32.3px;background:#d6dbe9;border-right:1px solid #b4bcd7;border-bottom:1px solid #b4bcd7;color:#3b3f46;line-height:18px;padding-top:7.500px;text-align:right;padding-right:10px;font-size:11.800px">1,200.00</div>
<div style="position:absolute;left:1052px;top:672px;width:125px;height:32.3px;background:#d6dbe9;border-right:1px solid #b4bcd7;border-bottom:1px solid #b4bcd7;color:#3b3f46;line-height:18px;padding-top:7.500px;padding-left:10px;font-size:11.800px"></div>
<div style="position:absolute;left:515.5px;top:704.3px;width:96.0px;height:49.5px;background:#f9fafc;border-right:1px solid #b4bcd7;border-bottom:1px solid #b4bcd7;color:#3b3f46;line-height:18px;padding-top:7.500px;padding-left:10px;font-size:11.800px">0518商务应酬<br>支出</div>
<div style="position:absolute;left:611.5px;top:704.3px;width:127.0px;height:49.5px;background:#f9fafc;border-right:1px solid #b4bcd7;border-bottom:1px solid #b4bcd7;color:#3b3f46;line-height:18px;padding-top:7.500px;padding-left:10px;font-size:11.800px">FK-240305-036</div>
<div style="position:absolute;left:738.5px;top:704.3px;width:99.5px;height:49.5px;background:#f9fafc;border-right:1px solid #b4bcd7;border-bottom:1px solid #b4bcd7;color:#3b3f46;line-height:18px;padding-top:7.500px;padding-left:10px;font-size:11.800px">商务应酬</div>
<div style="position:absolute;left:838px;top:704.3px;width:109.5px;height:49.5px;background:#f9fafc;border-right:1px solid #b4bcd7;border-bottom:1px solid #b4bcd7;color:#3b3f46;line-height:18px;padding-top:7.500px;padding-left:10px;font-size:11.800px">2023/05/18</div>
<div style="position:absolute;left:947.5px;top:704.3px;width:104.5px;height:49.5px;background:#f9fafc;border-right:1px solid #b4bcd7;border-bottom:1px solid #b4bcd7;color:#3b3f46;line-height:18px;padding-top:7.500px;text-align:right;padding-right:10px;font-size:11.800px">500.00</div>
<div style="position:absolute;left:1052px;top:704.3px;width:125px;height:49.5px;background:#f9fafc;border-right:1px solid #b4bcd7;border-bottom:1px solid #b4bcd7;color:#3b3f46;line-height:18px;padding-top:7.500px;padding-left:10px;font-size:11.800px"></div>
<div style="position:absolute;left:515.5px;top:753.8px;width:96.0px;height:32px;background:#d6dbe9;border-right:1px solid #b4bcd7;border-bottom:1px solid #b4bcd7;color:#3b3f46;line-height:18px;padding-top:7.500px;padding-left:10px;font-size:11.800px">0622薪酬支出</div>
<div style="position:absolute;left:611.5px;top:753.8px;width:127.0px;height:32px;background:#d6dbe9;border-right:1px solid #b4bcd7;border-bottom:1px solid #b4bcd7;color:#3b3f46;line-height:18px;padding-top:7.500px;padding-left:10px;font-size:11.800px">FK-240305-028</div>
<div style="position:absolute;left:738.5px;top:753.8px;width:99.5px;height:32px;background:#d6dbe9;border-right:1px solid #b4bcd7;border-bottom:1px solid #b4bcd7;color:#3b3f46;line-height:18px;padding-top:7.500px;padding-left:10px;font-size:11.800px">职工薪酬</div>
<div style="position:absolute;left:838px;top:753.8px;width:109.5px;height:32px;background:#d6dbe9;border-right:1px solid #b4bcd7;border-bottom:1px solid #b4bcd7;color:#3b3f46;line-height:18px;padding-top:7.500px;padding-left:10px;font-size:11.800px">2023/06/09</div>
<div style="position:absolute;left:947.5px;top:753.8px;width:104.5px;height:32px;background:#d6dbe9;border-right:1px solid #b4bcd7;border-bottom:1px solid #b4bcd7;color:#3b3f46;line-height:18px;padding-top:7.500px;text-align:right;padding-right:10px;font-size:11.800px">4,800.00</div>
<div style="position:absolute;left:1052px;top:753.8px;width:125px;height:32px;background:#d6dbe9;border-right:1px solid #b4bcd7;border-bottom:1px solid #b4bcd7;color:#3b3f46;line-height:18px;padding-top:7.500px;padding-left:10px;font-size:11.800px"></div>
<div style="position:absolute;left:1185.500px;top:642px;width:1px;height:140px;background:#d3d7e6"></div>
<svg style="left:0;top:0" width="1200" height="773" viewBox="0 0 1200 773"><rect x="268.550" y="170.400" width="915.500" height="593.900" rx="3.500" fill="rgba(245,166,35,.065)" stroke="#f5ad44" stroke-width="2.700"/></svg>
<svg style="left:0;top:0" width="1200" height="773" viewBox="0 0 1200 773"><rect x="365.800" y="125.900" width="81.400" height="28.400" rx="3.500" fill="rgba(245,166,35,.07)" stroke="#f5ad44" stroke-width="2.500"/></svg>
<div style="position:absolute;left:336.600px;top:127.100px;width:25.600px;height:25.600px;border-radius:50%;background:#f4ad48;color:#fff;font-family:'Liberation Serif',serif;font-size:25px;line-height:25.600px;text-align:center">1</div>
<div style="position:absolute;left:233.200px;top:421.100px;width:25.800px;height:25.800px;border-radius:50%;background:#f4ad48;color:#fff;font-family:'Liberation Serif',serif;font-size:23px;font-weight:bold;line-height:25.800px;text-align:center">2</div>
<div style="position:absolute;left:1014.500px;top:740.500px;font-size:22px;line-height:26px;color:rgba(255,255,255,.92);text-shadow:.7px .7px .8px rgba(40,40,45,.62),0 0 .8px rgba(90,90,100,.4);white-space:nowrap;font-family:'Liberation Sans',sans-serif;transform:scale(1,1.070);transform-origin:0 21px">CSDN @Leo.yuan</div>
<svg style="left:0;top:767.500px" width="5.500" height="5.500" viewBox="0 0 6 6"><path d="M0 0V6H6A6 6 0 010 0z" fill="#a8a8a8"/></svg>
<!--MAIN-->
</body>
</html>
